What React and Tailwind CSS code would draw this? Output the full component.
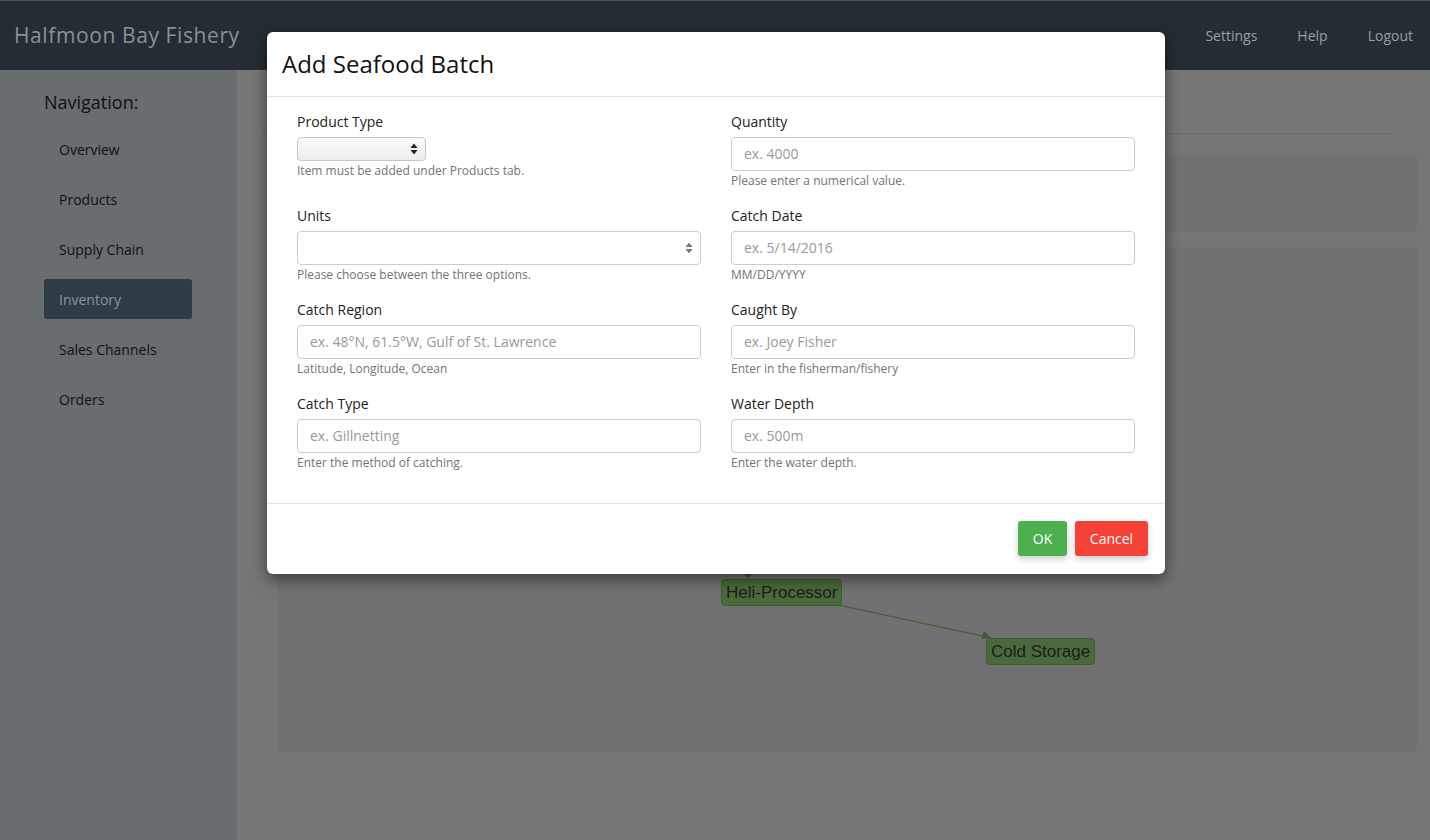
import React from "react";

const navItems = ["Overview", "Products", "Supply Chain", "Inventory", "Sales Channels", "Orders"];

const SelectArrows = ({ dark }) => (
  <svg width="8" height="12" viewBox="0 0 8 12" className={dark ? "text-[#222]" : "text-[#777]"}>
    <path d="M4 0.5 L7.5 5 L0.5 5 Z" fill="currentColor" />
    <path d="M4 11.5 L7.5 7 L0.5 7 Z" fill="currentColor" />
  </svg>
);

const Help = ({ children }) => (
  <div className="text-[12px] leading-[15px] text-[#737373] mt-[2px]">{children}</div>
);

const Label = ({ children }) => (
  <div className="text-[14px] leading-[20px] text-[#222] mb-[5px]">{children}</div>
);

const Field = ({ label, placeholder, help }) => (
  <div className="mb-[18px]">
    <Label>{label}</Label>
    <input
      type="text"
      placeholder={placeholder}
      className="w-full h-[34px] border border-[#ccc] rounded-[4px] px-[12px] pb-[1px] text-[14px] text-[#555] placeholder:text-[#999] outline-none bg-white"
    />
    <Help>{help}</Help>
  </div>
);

const App = () => {
  return (
    <div className="w-[1430px] h-[840px] overflow-hidden flex flex-col font-['Open_Sans',sans-serif] relative">
      {/* top bar */}
      <div className="h-[70px] shrink-0 bg-[#242d33] border-t border-[#545454] flex items-center justify-between pl-[14px] pr-[17px]">
        <div className="text-[21px] tracking-[0.6px] text-[#8c9195]">Halfmoon Bay Fishery</div>
        <div className="flex gap-[40px] text-[14px] text-[#9aa0a4]">
          <span>Settings</span>
          <span>Help</span>
          <span>Logout</span>
        </div>
      </div>

      <div className="flex flex-1">
        {/* sidebar */}
        <div className="w-[237px] shrink-0 bg-[#686d70] pl-[44px] pr-[45px] pt-[20px]">
          <div className="text-[18px] leading-[25px] text-[#111] mb-[14px]">Navigation:</div>
          {navItems.map((item) => (
            <div
              key={item}
              className={
                item === "Inventory"
                  ? "h-[40px] mb-[10px] flex items-center px-[15px] text-[14px] rounded-[3px] bg-[#2f3c45] text-[#8e959a]"
                  : "h-[40px] mb-[10px] flex items-center px-[15px] text-[14px] text-[#111]"
              }
            >
              {item}
            </div>
          ))}
        </div>

        {/* main */}
        <div className="flex-1 bg-[#767676] pl-[40px] pr-[13px]">
          <div className="h-[64px] border-b border-[#6a6a6a] mr-[25px] ml-[-15px]"></div>
          <div className="mt-[21px] h-[77px] rounded-[4px] bg-[#717171]"></div>
          <div className="mt-[15px] h-[505px] rounded-[4px] bg-[#717171] relative">
            <svg className="absolute inset-0" width="1140" height="505">
              <line x1="471" y1="250" x2="471" y2="326" stroke="#3d5c2f" strokeWidth="1.2" />
              <path d="M471 332 L465 324 L477 324 Z" fill="#3d5c2f" />
              <line x1="561" y1="358" x2="710" y2="390" stroke="#3d5c2f" strokeWidth="1.2" />
              <path d="M714 391 L704 392 L707 384 Z" fill="#3d5c2f" />
            </svg>
            <div className="absolute left-[444px] top-[332px] h-[27px] px-[4px] flex items-center rounded-[4px] bg-[#4a6a3b] border border-[#3e5c31] text-[17px] text-[#1c1c1c] font-['Liberation_Sans',Arial,sans-serif]">
              Heli-Processor
            </div>
            <div className="absolute left-[709px] top-[391px] h-[27px] px-[4px] flex items-center rounded-[4px] bg-[#4a6a3b] border border-[#3e5c31] text-[17px] text-[#1c1c1c] font-['Liberation_Sans',Arial,sans-serif]">
              Cold Storage
            </div>
          </div>
        </div>
      </div>

      {/* modal */}
      <div className="absolute inset-0 flex justify-center items-start">
        <div className="mt-[32px] ml-[2px] w-[898px] bg-white rounded-[6px] shadow-[0_5px_15px_rgba(0,0,0,0.5)]">
          <div className="h-[65px] border-b border-[#e5e5e5] flex items-center px-[15px]">
            <h2 className="text-[24px] text-[#111]">Add Seafood Batch</h2>
          </div>

          <div className="px-[30px] pt-[15px] pb-[15px] grid grid-cols-2 gap-x-[30px]">
            <div className="mb-[18px]">
              <Label>Product Type</Label>
              <div className="w-[129px] h-[24px] border border-[#c8c8c8] rounded-[4px] bg-[linear-gradient(#fafafa,#ededed)] flex items-center justify-end pr-[7px]">
                <SelectArrows dark />
              </div>
              <Help>Item must be added under Products tab.</Help>
            </div>
            <Field label="Quantity" placeholder="ex. 4000" help="Please enter a numerical value." />

            <div className="mb-[18px]">
              <Label>Units</Label>
              <div className="w-full h-[34px] border border-[#ccc] rounded-[4px] bg-white flex items-center justify-end pr-[7px]">
                <SelectArrows />
              </div>
              <Help>Please choose between the three options.</Help>
            </div>
            <Field label="Catch Date" placeholder="ex. 5/14/2016" help="MM/DD/YYYY" />

            <Field label="Catch Region" placeholder="ex. 48°N, 61.5°W, Gulf of St. Lawrence" help="Latitude, Longitude, Ocean" />
            <Field label="Caught By" placeholder="ex. Joey Fisher" help="Enter in the fisherman/fishery" />

            <Field label="Catch Type" placeholder="ex. Gillnetting" help="Enter the method of catching." />
            <Field label="Water Depth" placeholder="ex. 500m" help="Enter the water depth." />
          </div>

          <div className="border-t border-[#e5e5e5] pt-[17px] pb-[18px] pr-[17px] flex justify-end gap-[8px]">
            <button className="h-[35px] w-[49px] rounded-[3px] bg-[#4caf50] text-white text-[14px] shadow-[0_3px_6px_rgba(0,0,0,0.2)]">
              OK
            </button>
            <button className="h-[35px] w-[73px] rounded-[3px] bg-[#f44336] text-white text-[14px] shadow-[0_3px_6px_rgba(0,0,0,0.2)]">
              Cancel
            </button>
          </div>
        </div>
      </div>
    </div>
  );
};

export default App;
